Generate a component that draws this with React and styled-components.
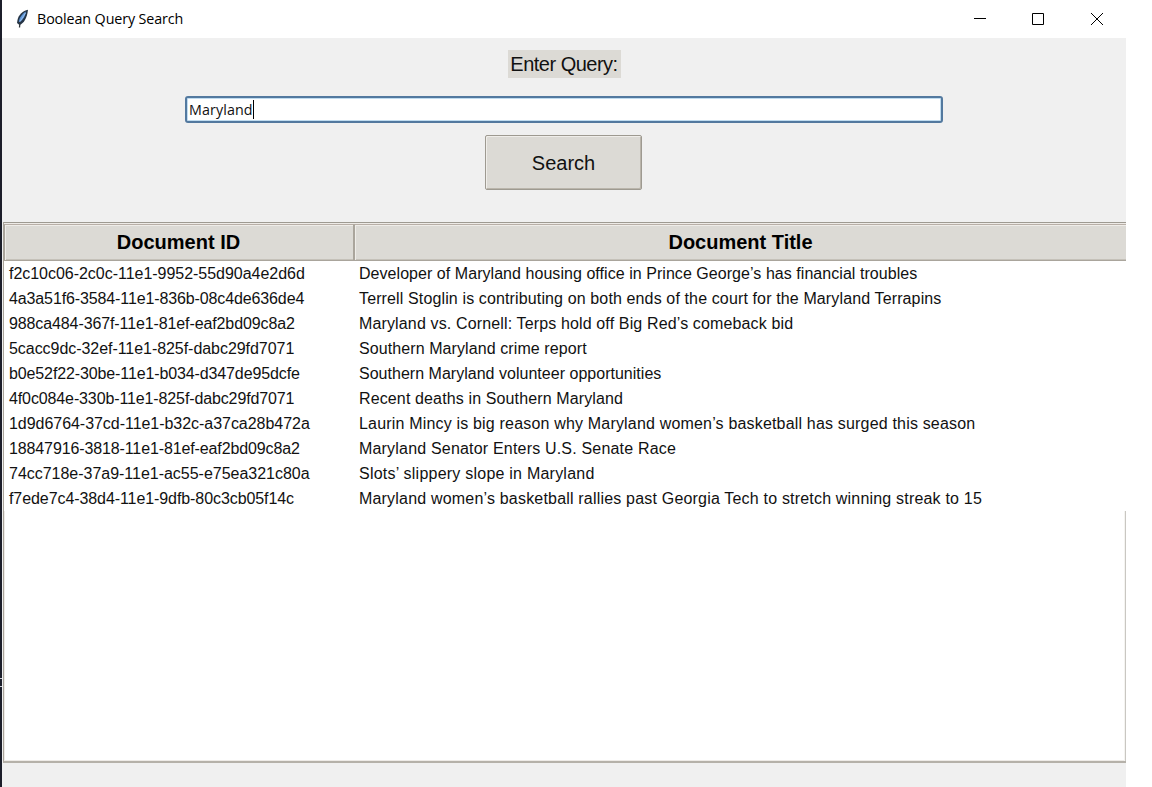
import React from 'react';
import styled, { createGlobalStyle } from 'styled-components';

const Global = createGlobalStyle`
  * { box-sizing: border-box; }
  body { margin: 0; background: #fff; overflow: hidden; }
`;

const Screen = styled.div`
  display: flex;
  width: 1152px;
  height: 787px;
  background: #fff;
`;

const DesktopEdge = styled.div`
  width: 2px;
  height: 787px;
  padding-top: 678px;
  background: #1c1e2a;
`;

const EdgeMark = styled.div`
  height: 1px;
  margin-bottom: 7px;
  background: #c9cbd2;
`;

const Window = styled.main`
  display: flex;
  flex-direction: column;
  width: 1124px;
  height: 787px;
  background: #f0f0f0;
  font-family: "Liberation Sans", Arial, sans-serif;
  color: #111;
  white-space: nowrap;
`;

const TitleBar = styled.header`
  display: flex;
  align-items: center;
  height: 38px;
  flex: none;
  padding-left: 12px;
  background: #fff;
`;

const Title = styled.h1`
  flex: 1;
  margin: 0 0 0 7px;
  font: 400 14.3px/20px "Open Sans", "Noto Sans", sans-serif;
  letter-spacing: ${(p) => p.$track}px;
  color: #000;
`;

const WindowButton = styled.button`
  display: flex;
  align-items: center;
  justify-content: center;
  width: 58.5px;
  height: 38px;
  padding: 0;
  border: 0;
  background: none;
`;

const Form = styled.form`
  display: flex;
  flex-direction: column;
  align-items: center;
  height: 184px;
  flex: none;
  padding-top: 12px;
`;

const Label = styled.label`
  width: 113px;
  height: 28px;
  background: #dcdad5;
  font-size: 20px;
  line-height: 29px;
  text-align: center;
  letter-spacing: ${(p) => p.$track}px;
`;

const Entry = styled.div`
  display: flex;
  align-items: center;
  width: 758px;
  height: 27px;
  margin-top: 18px;
  padding-left: 2px;
  border: 2px solid #53799f;
  border-radius: 3px;
  background: #fff;
  box-shadow: inset 0 0 0 1px #c0dcf0;
  font: 400 14.3px/20px "Open Sans", "Noto Sans", sans-serif;
  letter-spacing: ${(p) => p.$track}px;
`;

const Caret = styled.span`
  width: 1px;
  height: 19px;
  background: #000;
`;

const SearchButton = styled.button`
  width: 157px;
  height: 55px;
  margin: 12px 1px 0 0;
  padding: 0;
  border: 1px solid #9e9a91;
  border-radius: 2px;
  background: #dcdad5;
  box-shadow: inset 1px 1px #f0eeea, inset -1px -1px #bab5ab;
  font: 400 20px/54px "Liberation Sans", Arial, sans-serif;
  letter-spacing: ${(p) => p.$track}px;
  color: #111;
`;

const Tree = styled.section`
  display: grid;
  grid-template-rows: 38px 250px 1fr;
  height: 541px;
  margin-left: 1px;
  border-top: 1px solid #9e9a91;
  border-left: 1px solid #aaa59c;
  border-bottom: 2px solid #b5b1a9;
  background: #fff;
`;

const HeaderRow = styled.div`
  display: grid;
  grid-template-columns: 350px 1fr;
  border-top: 1px solid #eeebe7;
`;

const HeaderCell = styled.div`
  padding-right: ${(p) => p.$inset || 0}px;
  border: 1px solid #aaa59c;
  border-top-color: #b8afa7;
  border-right-width: ${(p) => (p.$last ? 0 : 1)}px;
  background: #dcdad5;
  box-shadow: inset 1px 1px #efede9, inset 0 -1px #c5c1b9;
  font-size: 20px;
  font-weight: 700;
  line-height: 35px;
  text-align: center;
  letter-spacing: ${(p) => p.$track}px;
  color: #000;
`;

const Row = styled.div`
  display: grid;
  grid-template-columns: 350px 1fr;
  height: 25px;
  padding-left: 5px;
  font-size: 16px;
  line-height: 25px;
`;

const Cell = styled.span`
  letter-spacing: ${(p) => p.$track || 0}px;
`;

const EmptyArea = styled.div`
  border-right: 1px solid #c9c7c2;
  box-shadow: inset -1px 0 #f5f4f1, inset 1px 0 #eeebe7, inset 0 -1px #eeebe7;
`;

const Feather = () => (
  <svg width="16" height="20" viewBox="0 0 16 20">
    <path d="M14 .8C9 1.500 4.500 6 3.500 11L3 14L5.500 16C10 14.500 13 9 14 .8Z" fill="#253547" />
    <path d="M12 2.500C8.500 4.500 5.500 8.500 4.800 12.500L6 13C9.500 10 11.500 6.500 12 2.500Z" fill="#5f97dc" />
    <path d="M11.500 4L6 12.500" fill="none" stroke="#a5c8ee" strokeWidth=".8" />
    <path d="M6 13L5.500 18.500" fill="none" stroke="#30363c" strokeWidth="1.300" />
  </svg>
);

// id, title, and the tracking of each in px
const rows = [
  ['f2c10c06-2c0c-11e1-9952-55d90a4e2d6d', 'Developer of Maryland housing office in Prince George’s has financial troubles', -0.03, 0.05],
  ['4a3a51f6-3584-11e1-836b-08c4de636de4', 'Terrell Stoglin is contributing on both ends of the court for the Maryland Terrapins', -0.12, 0.13],
  ['988ca484-367f-11e1-81ef-eaf2bd09c8a2', 'Maryland vs. Cornell: Terps hold off Big Red’s comeback bid', -0.11, 0.14],
  ['5cacc9dc-32ef-11e1-825f-dabc29fd7071', 'Southern Maryland crime report', -0.05, 0.09],
  ['b0e52f22-30be-11e1-b034-d347de95dcfe', 'Southern Maryland volunteer opportunities', -0.12, 0.02],
  ['4f0c084e-330b-11e1-825f-dabc29fd7071', 'Recent deaths in Southern Maryland', -0.12, 0.13],
  ['1d9d6764-37cd-11e1-b32c-a37ca28b472a', 'Laurin Mincy is big reason why Maryland women’s basketball has surged this season', -0.04, 0.18],
  ['18847916-3818-11e1-81ef-eaf2bd09c8a2', 'Maryland Senator Enters U.S. Senate Race', -0.12, 0.19],
  ['74cc718e-37a9-11e1-ac55-e75ea321c80a', 'Slots’ slippery slope in Maryland', -0.02, 0.23],
  ['f7ede7c4-38d4-11e1-9dfb-80c3cb05f14c', 'Maryland women’s basketball rallies past Georgia Tech to stretch winning streak to 15', -0.08, 0.19],
];

export default function App() {
  return (
    <Screen>
      <Global />
      <DesktopEdge><EdgeMark /><EdgeMark /></DesktopEdge>
      <Window>
        <TitleBar>
          <Feather />
          <Title $track={-0.11}>Boolean Query Search</Title>
          <WindowButton type="button" aria-label="Minimize">
            <svg width="12" height="12"><path d="M0 5.500H12" stroke="#000" /></svg>
          </WindowButton>
          <WindowButton type="button" aria-label="Maximize">
            <svg width="12" height="12"><path d="M.5.5h11v11H.5Z" fill="none" stroke="#000" /></svg>
          </WindowButton>
          <WindowButton type="button" aria-label="Close">
            <svg width="12" height="12"><path d="M0 0L12 12M12 0L0 12" stroke="#000" /></svg>
          </WindowButton>
        </TitleBar>
        <Form>
          <Label $track={-0.5}>Enter Query:</Label>
          <Entry $track={0.1}>Maryland<Caret /></Entry>
          <SearchButton type="button" $track={0}>Search</SearchButton>
        </Form>
        <Tree>
          <HeaderRow>
            <HeaderCell $track={0} $inset={1}>Document ID</HeaderCell>
            <HeaderCell $last $track={0}>Document Title</HeaderCell>
          </HeaderRow>
          <div>
            {rows.map(([id, title, idTrack, titleTrack]) => (
              <Row key={id}>
                <Cell $track={idTrack}>{id}</Cell>
                <Cell $track={titleTrack}>{title}</Cell>
              </Row>
            ))}
          </div>
          <EmptyArea />
        </Tree>
      </Window>
    </Screen>
  );
}
